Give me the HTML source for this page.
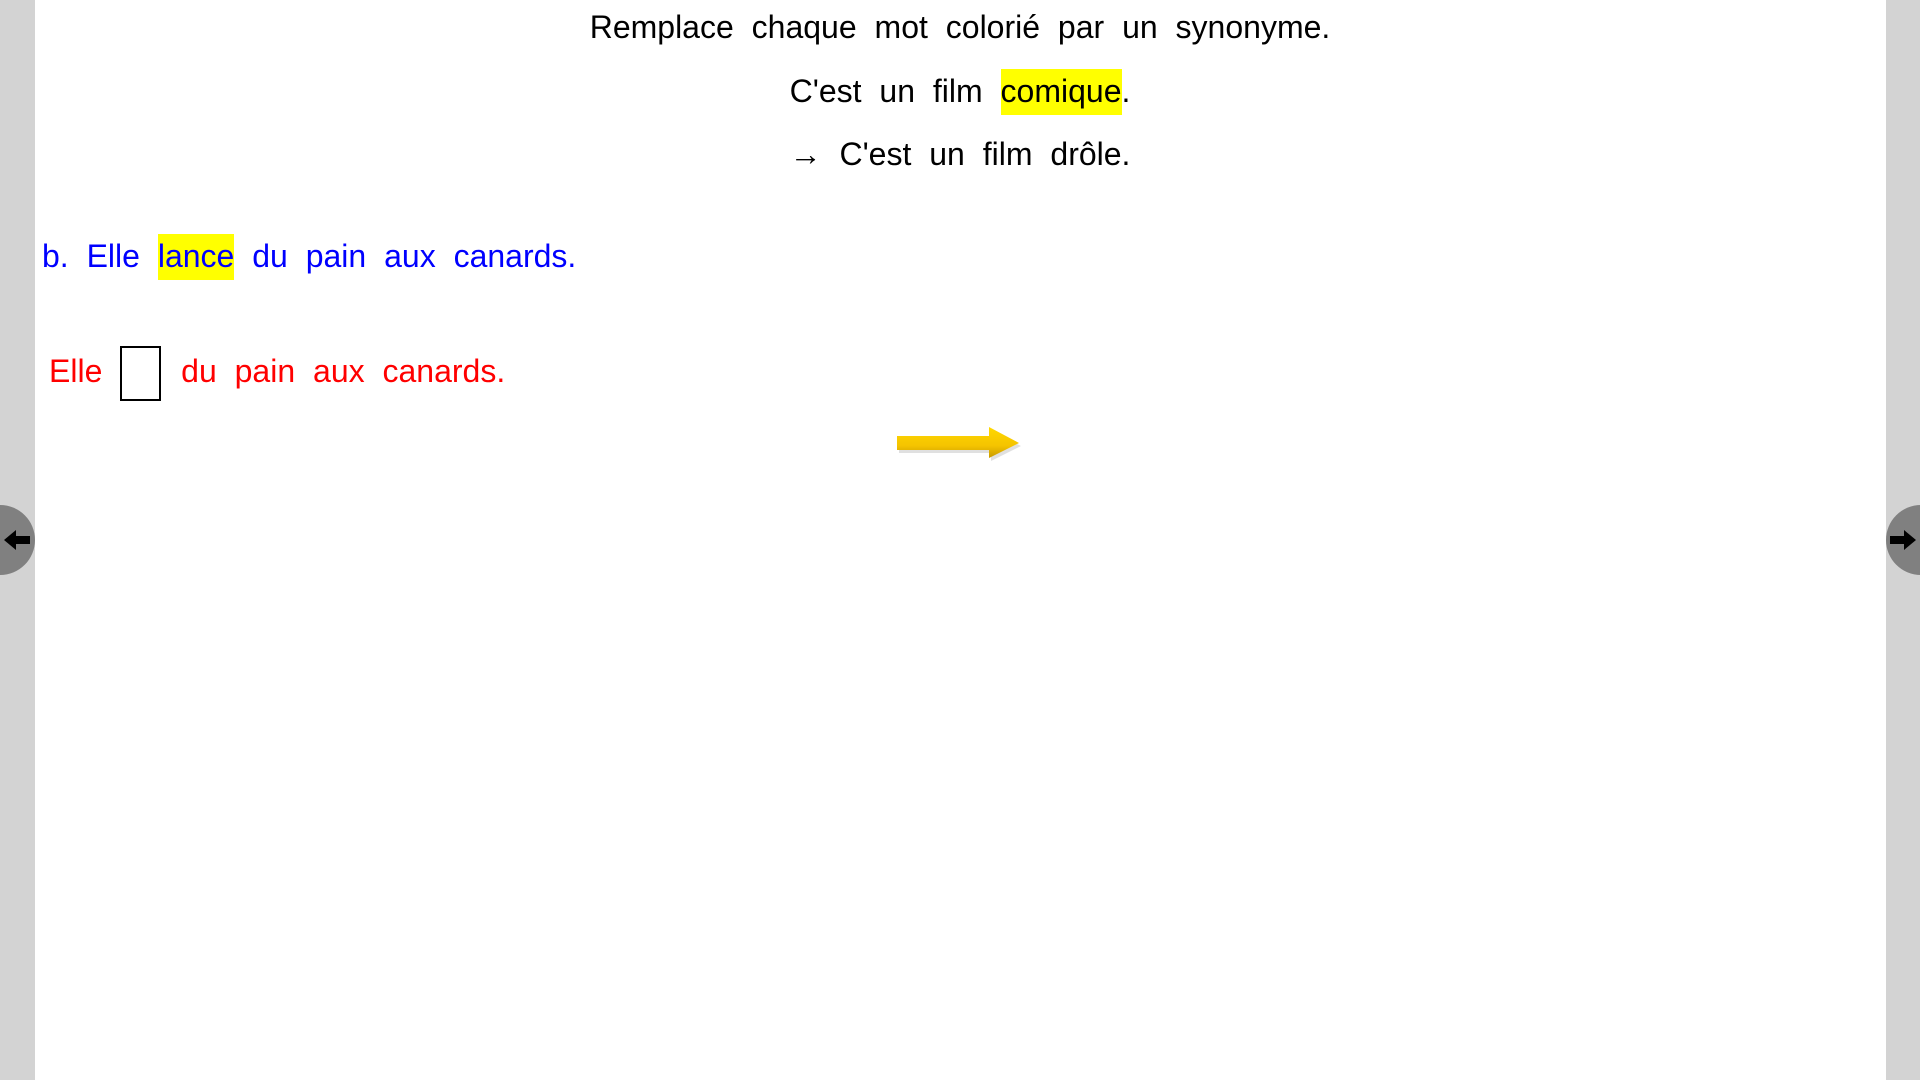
<!DOCTYPE html>
<html><head><meta charset="utf-8"><style>
html,body{margin:0;padding:0;width:1920px;height:1080px;overflow:hidden;background:#fff;font-family:"Liberation Sans",sans-serif;}
.bar{position:absolute;top:0;height:1080px;background:#d3d3d3;}
.l{position:absolute;font-size:32px;line-height:42px;white-space:nowrap;word-spacing:9px;}
.c{left:0;width:1920px;text-align:center;}
.hl{background:#ffff00;padding:4px 0 6px;}
.box{display:inline-block;width:37px;height:51px;border:2px solid #000;vertical-align:middle;margin:0 2px 0 0;}
.circ{position:absolute;top:505px;width:70px;height:70px;border-radius:50%;background:#808080;}
</style></head><body>
<div class="bar" style="left:0;width:35px"></div>
<div class="bar" style="left:1886px;width:34px"></div>
<div class="circ" style="left:-35px"></div>
<div class="circ" style="left:1886px"></div>
<svg style="position:absolute;left:0;top:525px" width="34" height="30"><polygon points="4,15 16,5 16,11 30,11 30,19 16,19 16,25" fill="#000"/></svg>
<svg style="position:absolute;left:1886px;top:525px" width="34" height="30"><polygon points="30,15 18,5 18,11 4,11 4,19 18,19 18,25" fill="#000"/></svg>

<div class="l c" style="top:6px">Remplace chaque mot colorié par un synonyme.</div>
<div class="l c" style="top:70px">C'est un film <span class="hl">comique</span>.</div>
<div class="l c" style="top:133px">→ C'est un film drôle.</div>
<div class="l" style="left:42px;top:235px;color:#0000ff">b. Elle <span class="hl">lance</span> du pain aux canards.</div>
<div class="l" style="left:49px;top:346px;color:#ff0000">Elle <span class="box"></span> du pain aux canards.</div>

<svg style="position:absolute;left:895px;top:427px" width="130" height="40">
<defs><linearGradient id="g" x1="0" y1="0" x2="0" y2="1"><stop offset="0" stop-color="#ffd800"/><stop offset="0.6" stop-color="#f5c400"/><stop offset="1" stop-color="#c89a00"/></linearGradient></defs>
<polygon points="3,11 95,11 95,2 125,17 95,32 95,24 3,24" fill="#999" opacity="0.3" transform="translate(1,2)"/>
<polygon points="2,9 94,9 94,0 124,16 94,31 94,23 2,23" fill="url(#g)"/>
</svg>
</body></html>
